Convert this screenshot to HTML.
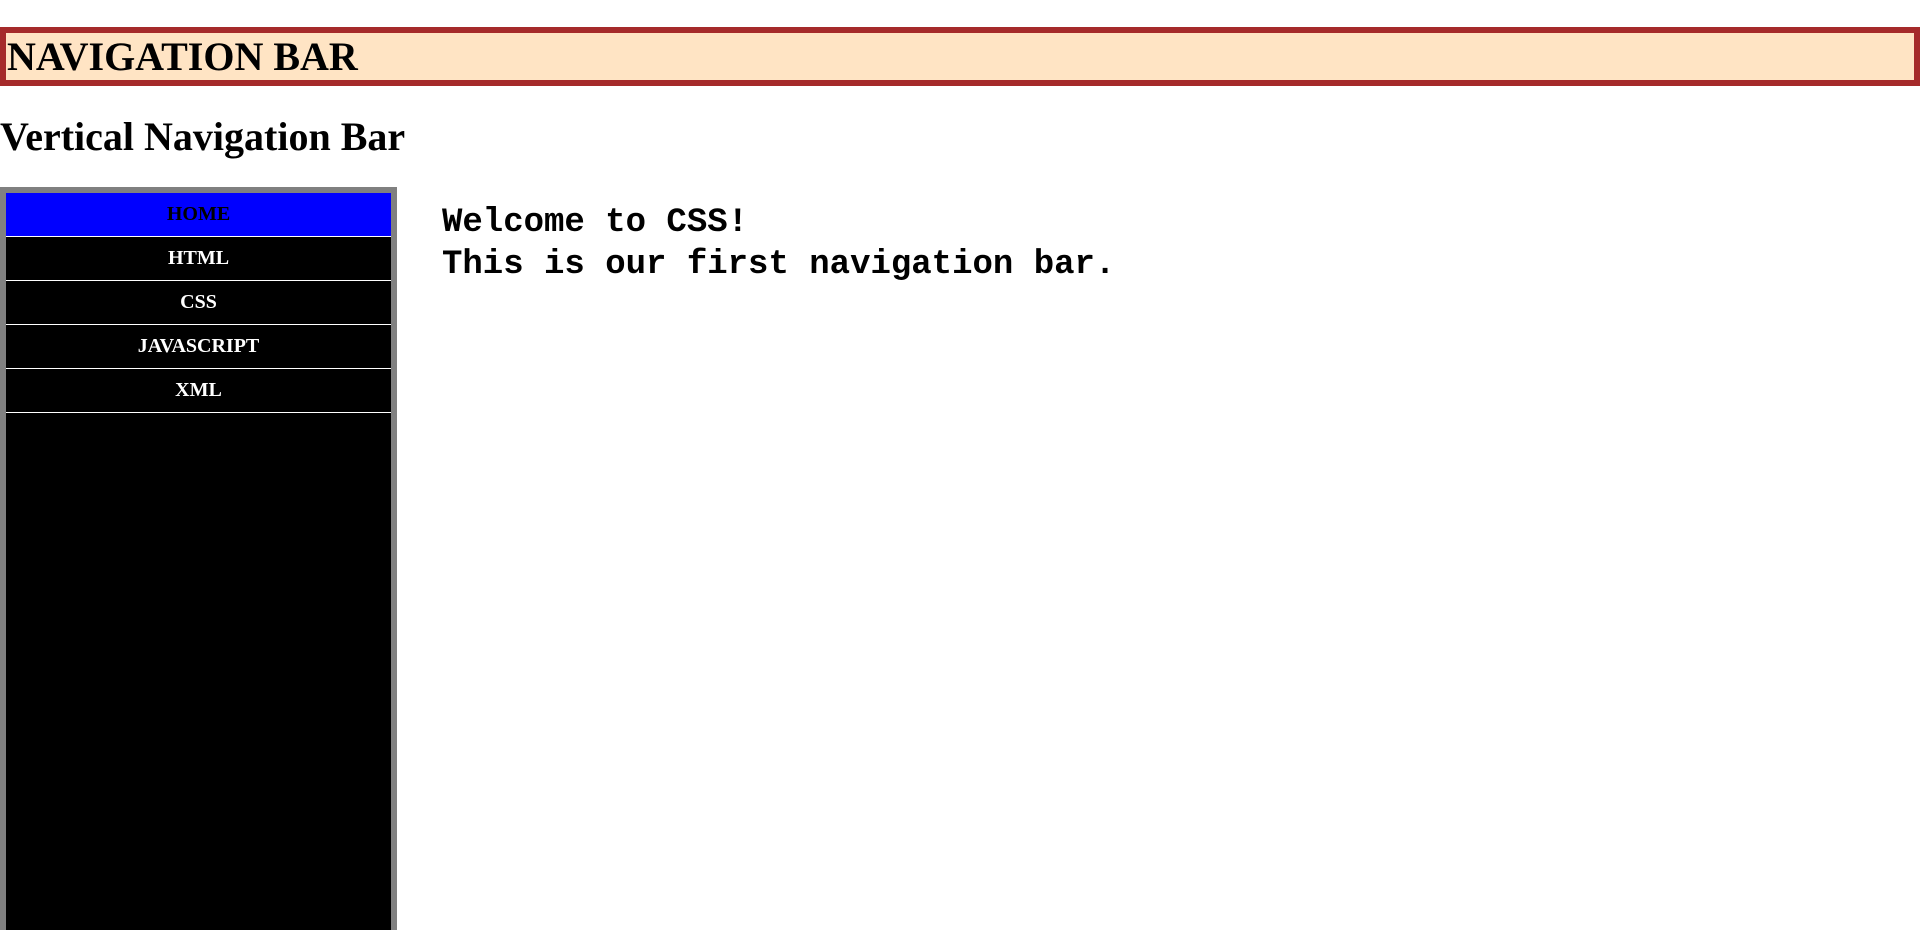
<!DOCTYPE html>
<html><head><meta charset="utf-8"><style>
html,body{margin:0;padding:0;background:#fff;width:1920px;height:930px;overflow:hidden}
.hdr{position:absolute;left:0;top:27px;width:1907px;height:47px;border:6px solid #a52a2a;background:#ffe4c4;font:bold 40px/47px "Liberation Serif",serif;color:#000;padding-left:1px;}
.h2{position:absolute;left:0;top:113px;font:bold 40px/48px "Liberation Serif",serif;color:#000}
.side{position:absolute;left:0;top:187px;width:385px;height:737px;border:6px solid #808080;border-bottom:none;background:#000}
.side div{height:43px;border-bottom:1px solid #fff;text-align:center;font:bold 20px/43px "Liberation Serif",serif;color:#fff}
.side div.a{background:#0000ff;color:#000}
.txt{position:absolute;left:442px;top:202px;font:bold 34px/42px "Liberation Mono","DejaVu Sans Mono",monospace;color:#000;white-space:pre}
</style></head><body>
<div class="hdr">NAVIGATION BAR</div>
<div class="h2">Vertical Navigation Bar</div>
<div class="side"><div class="a">HOME</div><div>HTML</div><div>CSS</div><div>JAVASCRIPT</div><div>XML</div></div>
<div class="txt">Welcome to CSS!
This is our first navigation bar.</div>
</body></html>
